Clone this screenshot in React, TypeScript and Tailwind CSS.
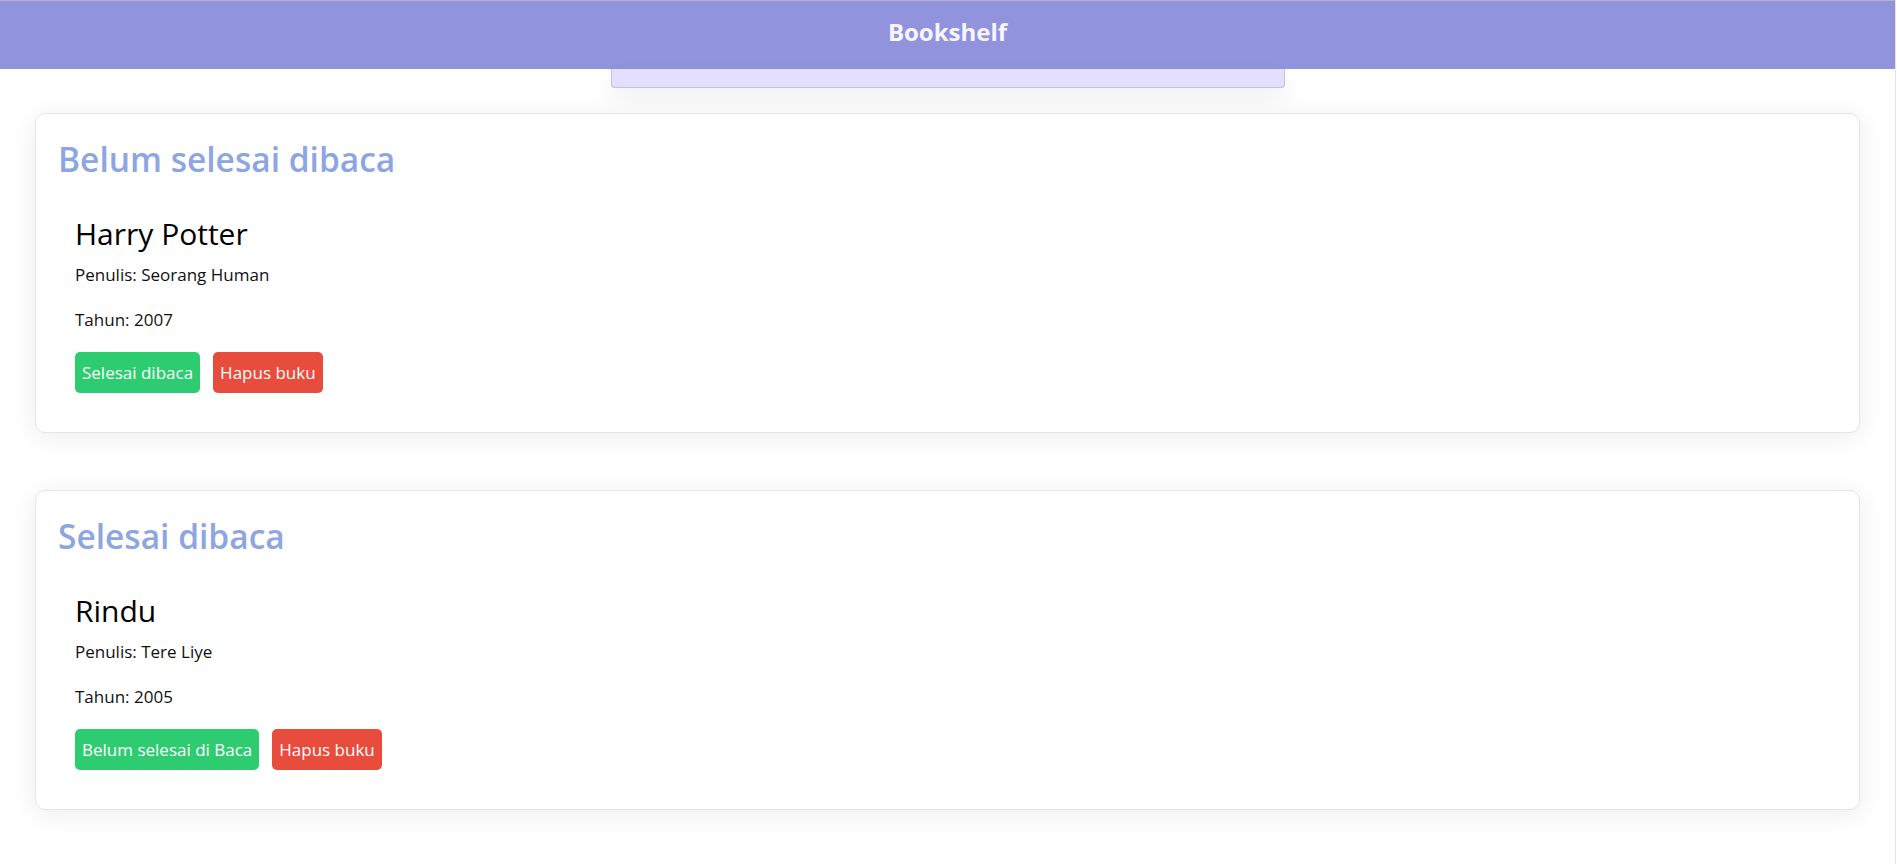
const unread = [
  { id: 1, title: "Harry Potter", author: "Seorang Human", year: 2007 },
];

const done = [{ id: 2, title: "Rindu", author: "Tere Liye", year: 2005 }];

type Book = { id: number; title: string; author: string; year: number };

const BookItem = ({ book, toggleLabel }: { book: Book; toggleLabel: string }) => (
  <article className="flex flex-col pl-[17px] mt-[37px]">
    <h3 className="text-[30px] leading-[36px] text-black">{book.title}</h3>
    <p className="text-[17px] leading-[24px] text-[#111] mt-[11px]">Penulis: {book.author}</p>
    <p className="text-[17px] leading-[24px] text-[#111] mt-[21px]">Tahun: {book.year}</p>
    <div className="flex gap-[13px] mt-[20px]">
      <button className="h-[41px] px-[7px] rounded-[5px] bg-[#2ecc71] text-white text-[17px] leading-[24px]">
        {toggleLabel}
      </button>
      <button className="h-[41px] px-[7px] rounded-[5px] bg-[#e74c3c] text-white text-[17px] leading-[24px]">
        Hapus buku
      </button>
    </div>
  </article>
);

const Shelf = ({ title, books, toggleLabel }: { title: string; books: Book[]; toggleLabel: string }) => (
  <section className="mx-[35px] rounded-[10px] border border-[#e6e4e6] bg-white shadow-[0_4px_26px_rgba(0,0,0,0.08)] pt-[25px] pb-[39px] px-[22px]">
    <h2 className="text-[33.5px] leading-[40px] font-semibold text-[#8da6e2]">{title}</h2>
    {books.map((b) => (
      <BookItem key={b.id} book={b} toggleLabel={toggleLabel} />
    ))}
  </section>
);

export default function App() {
  return (
    <div className="flex min-h-[864px] bg-white" style={{ fontFamily: '"Open Sans", "Noto Sans", sans-serif' }}>
      <div className="w-[1895px] flex flex-col">
        <header className="h-[69px] border-t border-[#b8b2bc] bg-[#9193dd] flex justify-center pt-[15px]">
          <h1 className="text-[24px] leading-[32px] font-bold text-[#f7f6ff]">Bookshelf</h1>
        </header>
        {/* input section, mostly scrolled under the header */}
        <div className="mx-auto w-[674px] h-[19px] bg-[#e3e0ff] border border-t-0 border-[#c6bfdf] rounded-b-[4px] shadow-[0_10px_22px_rgba(0,0,0,0.07)]" />
        <main className="flex flex-col gap-[57px] mt-[25px] pb-[55px]">
          <Shelf title="Belum selesai dibaca" books={unread} toggleLabel="Selesai dibaca" />
          <Shelf title="Selesai dibaca" books={done} toggleLabel="Belum selesai di Baca" />
        </main>
      </div>
      <div className="w-[1px] bg-[#e4e4e4]" />
    </div>
  );
}
